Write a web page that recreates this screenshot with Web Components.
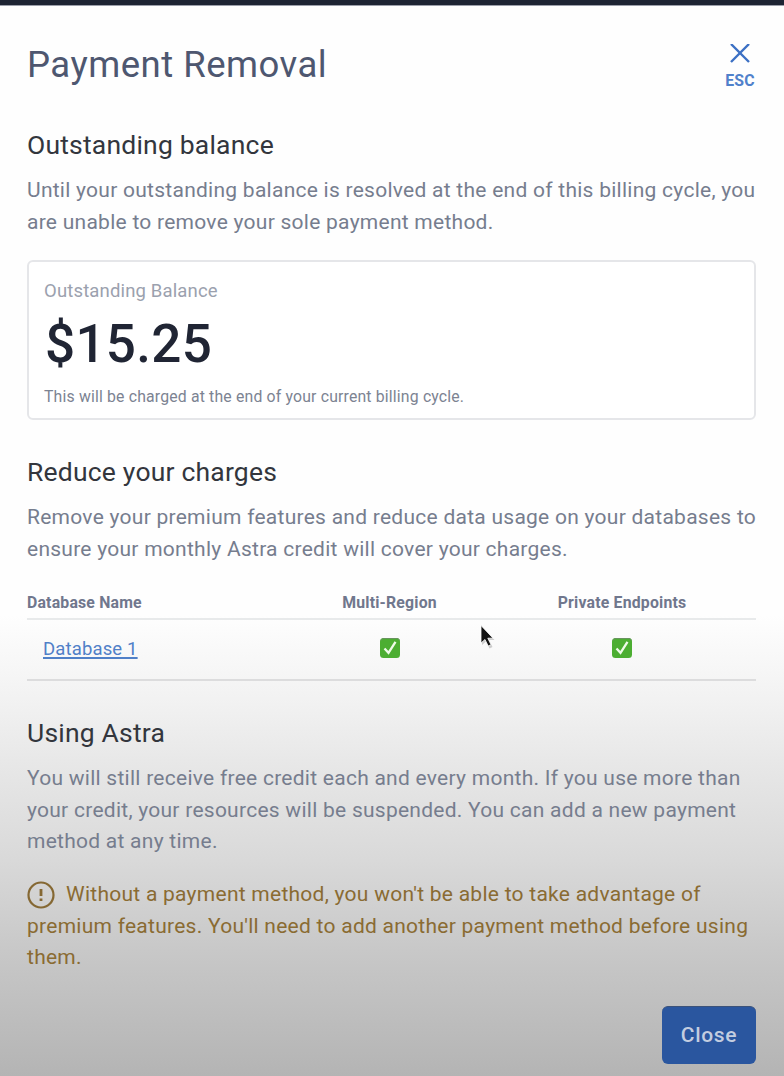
<!DOCTYPE html>
<html lang="en">
<head>
<meta charset="utf-8">
<title>Payment Removal</title>
<style>
html,body{margin:0;height:100%}
body{font-family:Roboto,"Liberation Sans",sans-serif;overflow:hidden}
</style>
</head>
<body>
<payment-dialog>
  <dialog-header slot="header">Payment Removal</dialog-header>
  <dialog-section heading="Outstanding balance">
    Until your outstanding balance is resolved at the end of this billing cycle, you<br>are unable to remove your sole payment method.
  </dialog-section>
  <balance-card label="Outstanding Balance" amount="$15.25">This will be charged at the end of your current billing cycle.</balance-card>
  <dialog-section heading="Reduce your charges">
    Remove your premium features and reduce data usage on your databases to<br>ensure your monthly Astra credit will cover your charges.
  </dialog-section>
  <feature-table>Database 1</feature-table>
  <dialog-section heading="Using Astra">
    You will still receive free credit each and every month. If you use more than<br>your credit, your resources will be suspended. You can add a new payment<br>method at any time.
  </dialog-section>
  <warning-note>Without a payment method, you won't be able to take advantage of<br>premium features. You'll need to add another payment method before using<br>them.</warning-note>
  <primary-button slot="footer">Close</primary-button>
</payment-dialog>
<script>
const define = (name, html) => customElements.define(name, class extends HTMLElement {
  constructor() {
    super();
    this.attachShadow({ mode: 'open' }).innerHTML = html;
    this.shadowRoot.querySelectorAll('[data-attr]').forEach(el => {
      el.textContent = this.getAttribute(el.dataset.attr);
    });
  }
});

define('payment-dialog', `<style>
:host{display:block;box-sizing:border-box;position:relative;height:1076px;padding:40px 28px 0 27px;border-top:5px solid #1d2433;
background:linear-gradient(#fefefe 0,#fefefe 610px,#f7f7f7 660px,#f1f1f1 700px,#e8e8e8 755px,#d9d9d9 855px,#c8c8c8 945px,#b4b4b4 1071px)}
:host::before{content:"";position:absolute;left:0;right:0;top:0;height:1px;background:#9b9faa}
footer{display:flex;justify-content:flex-end;margin-top:32px}
svg{position:absolute;left:479px;top:619px}
</style>
<slot name="header"></slot><slot></slot><footer><slot name="footer"></slot></footer>
<svg width="18" height="30" viewBox="0 0 18 30"><path d="M3 3v18l4-3.500 3.500 7 3-1.500-3.500-7h5.500z" fill="#000" opacity=".18"/><path d="M2 1.500v17.500l4-3.500 3.200 6.500 2.800-1.300-3.200-6.500h5.200z" fill="#111" stroke="#fff" stroke-width=".8"/></svg>`);

define('dialog-header', `<style>
:host{display:flex;justify-content:space-between;height:84px}
h1{margin:0;font:400 36.500px/40px Roboto,sans-serif;letter-spacing:.5px;color:#4e5770}
button{display:flex;flex-direction:column;align-items:center;border:0;background:none;padding:0;width:34px;height:49px;margin-right:-1px;font:700 15.800px/18px Roboto,sans-serif;letter-spacing:.2px;color:#5081cb}
svg{display:block;margin:-1px 0 9px}
</style><h1><slot></slot></h1>
<button><svg width="22" height="19" viewBox="0 0 22 19"><path d="M2 0l18 18M20 0L2 18" stroke="#3c70c4" stroke-width="2.400"/></svg>ESC</button>`);

define('dialog-section', `<style>
:host{display:block;white-space:nowrap}
h2{margin:0;font:400 26.500px/32px Roboto,sans-serif;letter-spacing:.2px;color:#33363d}
p{margin:14px 0 0;font:400 21px/31.700px Roboto,sans-serif;letter-spacing:.26px;color:#767d8e}
</style><h2 data-attr="heading"></h2><p><slot></slot></p>`);

define('balance-card', `<style>
:host{display:block;box-sizing:border-box;height:160px;margin:22px 0 36px;padding:18px 15px;border:2px solid #e5e6e9;border-radius:6px;background:#fff}
label{display:block;font:400 18.500px/22px Roboto,sans-serif;letter-spacing:.15px;color:#9ba1ae}
strong{display:block;margin:11px 0 0 1px;font:500 53px/62px Roboto,sans-serif;letter-spacing:.3px;color:#202534}
small{display:block;margin-top:12px;font:400 15.800px/20px Roboto,sans-serif;letter-spacing:.17px;color:#7c8392}
</style><label data-attr="label"></label><strong data-attr="amount"></strong><small><slot></slot></small>`);

define('check-mark', `<style>:host{display:inline-flex;margin-top:-3px}svg{display:block}</style>
<svg width="22" height="22" viewBox="0 0 22 22"><rect x="1" y="1" width="20" height="20" rx="3.500" fill="#4cae32"/><path d="M2 3.500Q2.500 1.500 5 1.500H18Q20 1.500 20.300 3.500" fill="none" stroke="#699360"/><path d="M5.500 11.500l4 4.300 7-11" fill="none" stroke="#effbe9" stroke-width="2.300"/></svg>`);

define('feature-table', `<style>
:host{display:block;margin:24px 0 36px}
.row{display:grid;grid-template-columns:246px 233px 232px;align-items:center;justify-items:center}
.row>:first-child{justify-self:start}
.head{height:28px;font:700 15.800px/26px Roboto,sans-serif;letter-spacing:.2px;color:#70778d;border-bottom:2px solid #e8eaeb}
.head span{margin-top:-2px}
.body{height:59px;border-bottom:2px solid #dcdcdd}
a{margin-left:16px;font:400 18.500px/24px Roboto,sans-serif;letter-spacing:.15px;color:#5080c8;text-decoration:underline;text-decoration-thickness:1.500px;text-underline-offset:2px}
</style>
<div class="row head"><span>Database Name</span><span>Multi-Region</span><span>Private Endpoints</span></div>
<div class="row body"><a><slot></slot></a><check-mark></check-mark><check-mark></check-mark></div>`);

define('warning-note', `<style>
:host{display:block;margin-top:21px;font:400 21px/31.700px Roboto,sans-serif;letter-spacing:.26px;color:#8a6b32;white-space:nowrap}
svg{width:28px;height:28px;vertical-align:-7px;margin:-4px 11px -4px 0;position:relative;top:-3px}
</style><svg viewBox="0 0 28 28" fill="none" stroke="#856833"><circle cx="14" cy="14" r="12.500" stroke-width="2.200"/><path d="M14 8v7M14 17.500v2.500" stroke-width="2.800"/></svg><slot></slot>`);

define('primary-button', `<style>
:host{display:block}
button{width:94px;height:58px;padding:0 0 2px;border:0;border-top:1px solid #3c5279;border-radius:6px;background:#2a569f;color:#c3cde0;font:500 21px/54px Roboto,sans-serif;letter-spacing:.7px}
</style><button><slot></slot></button>`);
</script>
</body>
</html>
